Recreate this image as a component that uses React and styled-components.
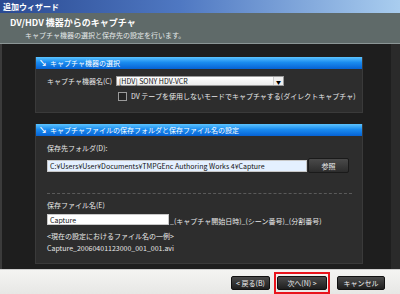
import React from 'react';
import styled, {createGlobalStyle} from 'styled-components';

const GlobalStyle = createGlobalStyle`
  body {
    margin: 0;
    background: #1f1f1f;
    font-family: "Noto Sans CJK JP", "Liberation Sans", sans-serif;
  }
`;

const Window = styled.div`
  width: 400px;
  height: 294px;
  display: flex;
  flex-direction: column;
  overflow: hidden;
`;

const TitleBar = styled.div`
  height: 13px;
  flex-shrink: 0;
  display: flex;
  align-items: center;
  padding-left: 3px;
  background: linear-gradient(to right, #2a4a92, #4f78c2 45%, #a9cdef);
  color: #fff;
  font-size: 8px;
  font-weight: bold;
`;

const Header = styled.div`
  height: 30px;
  flex-shrink: 0;
  background: #5f6a69;
  border-bottom: 1px solid #8c9696;
  color: #fff;
  display: flex;
  flex-direction: column;
  justify-content: center;
  gap: 3px;
`;

const HeaderTitle = styled.div`
  padding-left: 10px;
  font-size: 9px;
  font-weight: bold;
  line-height: 11px;
`;

const HeaderText = styled.div`
  padding-left: 25px;
  font-size: 7px;
  line-height: 9px;
  color: #e4e8e8;
`;

const Body = styled.div`
  flex: 1;
  background: #1e1e1e;
  border-left: 2px solid #3b3b3b;
  border-right: 9px solid #2a2a2a;
  padding: 13px 28px 5px 33px;
  display: flex;
  flex-direction: column;
  gap: 11px;
`;

const Panel = styled.div`
  height: ${({h}) => h}px;
  background: #2d2d2d;
  border: 1px solid #3a3a3a;
  border-top: none;
  display: flex;
  flex-direction: column;
`;

const PanelHead = styled.div`
  height: 12px;
  flex-shrink: 0;
  display: flex;
  align-items: center;
  gap: 3px;
  padding-left: 3px;
  background: linear-gradient(to bottom, #5cc4ff, #1a8cf0 45%, #0662d4);
  color: #fff;
  font-size: 7px;
`;

const Arrow = styled.span`
  font-size: 8px;
  font-weight: bold;
  line-height: 8px;
`;

const PanelBody = styled.div`
  flex: 1;
  padding: ${({pad}) => pad};
  display: flex;
  flex-direction: column;
  color: #e8e8e8;
  font-size: 7px;
`;

const Row = styled.div`
  display: flex;
  align-items: center;
  gap: ${({gap}) => gap || 0}px;
  margin-left: ${({indent}) => indent || 0}px;
  margin-top: ${({mt}) => mt || 0}px;
`;

const Label = styled.div`
  width: ${({w}) => (w ? `${w}px` : 'auto')};
  line-height: 9px;
  margin-top: ${({mt}) => mt || 0}px;
  white-space: nowrap;
`;

const Select = styled.div`
  width: 168px;
  height: 10px;
  background: linear-gradient(to bottom, #ffffff, #ececec);
  border: 1px solid #999;
  box-sizing: border-box;
  display: flex;
  align-items: center;
  color: #111;
  font-size: 7px;
  padding-left: 2px;
`;

const SelectText = styled.span`
  flex: 1;
`;

const DropBtn = styled.span`
  width: 9px;
  height: 8px;
  background: #eee;
  border-left: 1px solid #ccc;
  display: flex;
  align-items: center;
  justify-content: center;
  font-size: 5px;
  color: #000;
`;

const Check = styled.span`
  width: 7px;
  height: 7px;
  border: 1px solid #9a9a9a;
  background: #242424;
`;

const Input = styled.div`
  width: ${({w}) => w}px;
  height: ${({h}) => h}px;
  background: ${({tint}) => (tint ? '#e4f0ff' : '#fff')};
  border: 1px solid #c8c8c8;
  box-sizing: border-box;
  display: flex;
  align-items: center;
  padding-left: 2px;
  color: #111;
  font-size: 7px;
  white-space: nowrap;
  overflow: hidden;
`;

const SmallButton = styled.div`
  width: 41px;
  height: 15px;
  margin-left: 1px;
  box-sizing: border-box;
  border: 1px solid #1a1a1a;
  border-radius: 2px;
  background: linear-gradient(to bottom, #4a4a4a, #2c2c2c);
  color: #eee;
  font-size: 7px;
  display: flex;
  align-items: center;
  justify-content: center;
`;

const Dashed = styled.div`
  height: 0;
  margin: 20px 6px 0 0;
  border-top: 1px dashed #5a5a5a;
`;

const Suffix = styled.span`
  margin-top: 3px;
  margin-left: 1px;
`;

const Footer = styled.div`
  height: 26px;
  flex-shrink: 0;
  background: linear-gradient(to bottom, #f4f4f2, #e6e6e4);
  border-top: 1px solid #d0d0d0;
  display: flex;
  align-items: center;
  justify-content: flex-end;
  padding-right: 15px;
`;

const Button = styled.div`
  width: ${({w}) => w}px;
  height: 14px;
  box-sizing: border-box;
  border-radius: 2px;
  border: 1px solid #111;
  background: linear-gradient(to bottom, #4a4a4a, #1e1e1e);
  color: #f0f0f0;
  font-size: 7px;
  display: flex;
  align-items: center;
  justify-content: center;
  margin-left: ${({ml}) => ml || 0}px;
`;

const Highlight = styled.div`
  border: 2px solid #e8141c;
  padding: 2px 1px;
  margin-left: 4px;
  margin-right: 7px;
  display: flex;
`;

const App = () => (
  <Window>
    <GlobalStyle/>
    <TitleBar>追加ウィザード</TitleBar>
    <Header>
      <HeaderTitle>DV/HDV 機器からのキャプチャ</HeaderTitle>
      <HeaderText>キャプチャ機器の選択と保存先の設定を行います。</HeaderText>
    </Header>
    <Body>
      <Panel h={55}>
        <PanelHead><Arrow>↘</Arrow>キャプチャ機器の選択</PanelHead>
        <PanelBody pad="7px 0 0 11px">
          <Row>
            <Label w={69}>キャプチャ機器名(C)</Label>
            <Select>
              <SelectText>[HDV] SONY HDV-VCR</SelectText>
              <DropBtn>▼</DropBtn>
            </Select>
          </Row>
          <Row indent={71} mt={6} gap={4}>
            <Check/>
            <Label>DV テープを使用しないモードでキャプチャする(ダイレクトキャプチャ)</Label>
          </Row>
        </PanelBody>
      </Panel>
      <Panel h={139}>
        <PanelHead><Arrow>↘</Arrow>キャプチャファイルの保存フォルダと保存ファイル名の設定</PanelHead>
        <PanelBody pad="8px 4px 0 11px">
          <Label>保存先フォルダ(D):</Label>
          <Row mt={5}>
            <Input w={260} h={12} tint>C:¥Users¥User¥Documents¥TMPGEnc Authoring Works 4¥Capture</Input>
            <SmallButton>参照</SmallButton>
          </Row>
          <Dashed/>
          <Label mt={7}>保存ファイル名(E)</Label>
          <Row mt={3}>
            <Input w={122} h={11}>Capture</Input>
            <Suffix>_(キャプチャ開始日時)_(シーン番号)_(分割番号)</Suffix>
          </Row>
          <Label mt={6}>&lt;現在の設定におけるファイル名の一例&gt;</Label>
          <Label mt={3}>Capture_20060401123000_001_001.avi</Label>
        </PanelBody>
      </Panel>
    </Body>
    <Footer>
      <Button w={39}>&lt; 戻る(B)</Button>
      <Highlight>
        <Button w={50}>次へ(N) &gt;</Button>
      </Highlight>
      <Button w={48}>キャンセル</Button>
    </Footer>
  </Window>
);

export default App;
